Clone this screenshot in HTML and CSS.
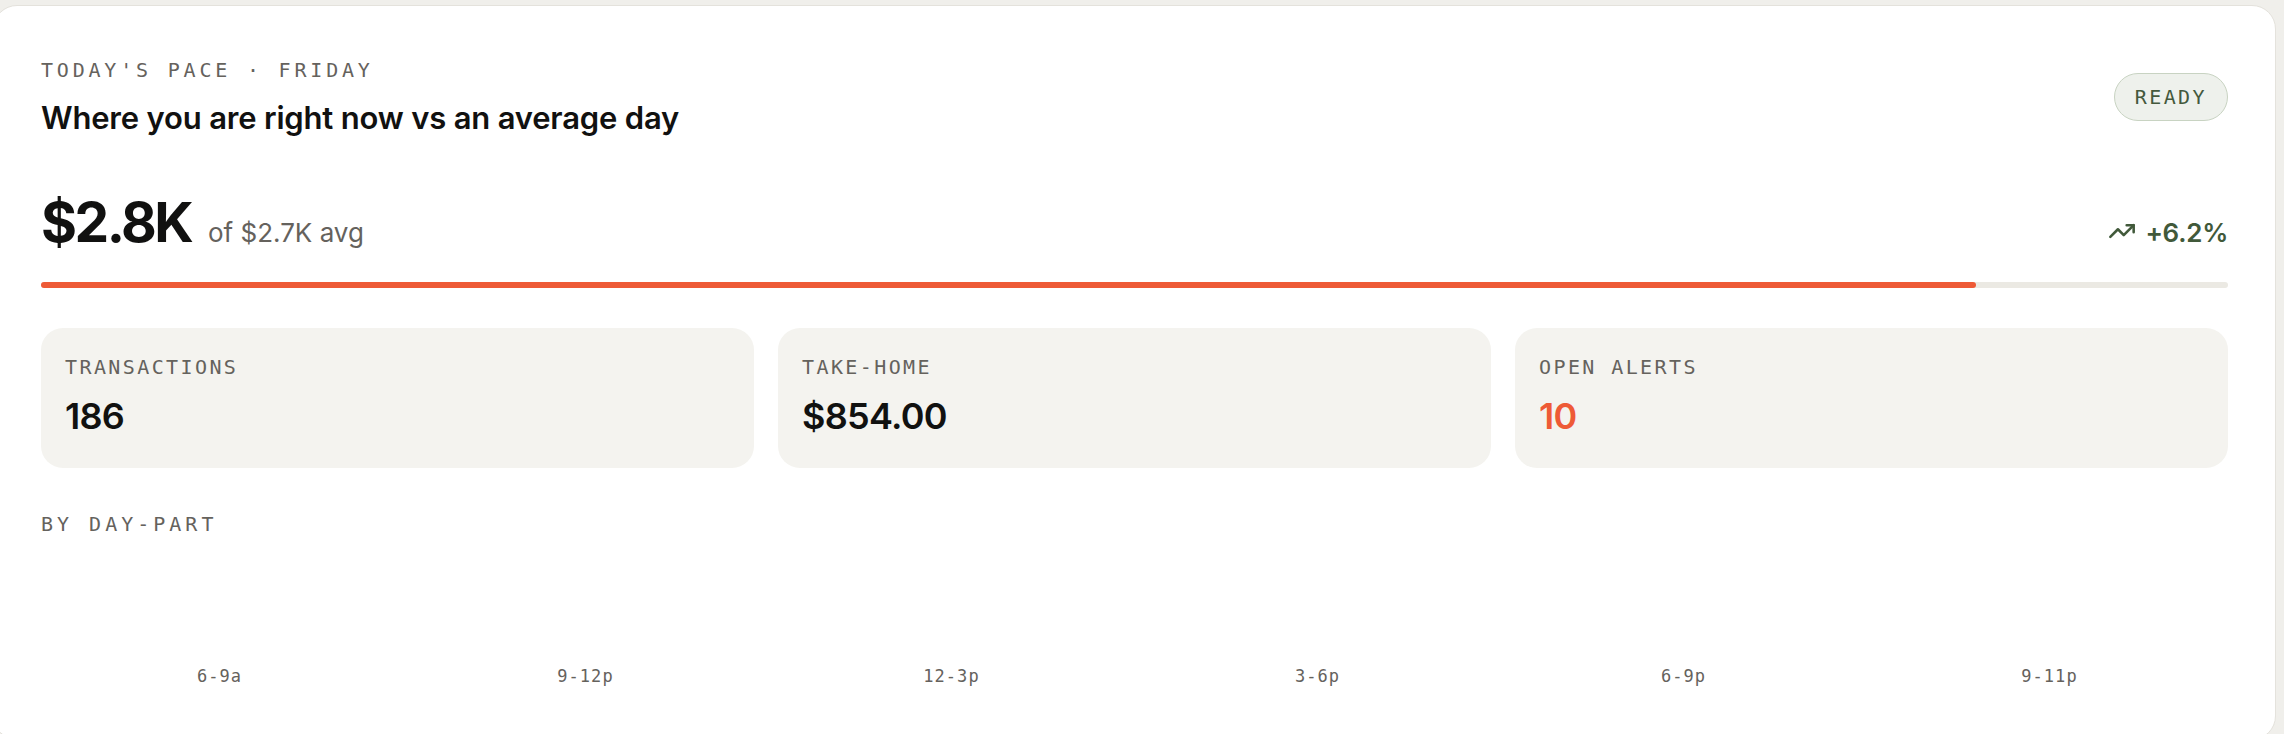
FILE: index.html
```html
<!DOCTYPE html>
<html lang="en">
<head>
    <meta charset="UTF-8">
    <meta name="viewport" content="width=device-width, initial-scale=1.0">
    <title>Today's Pace</title>
    <link rel="stylesheet" href="styles.css">
</head>
<body>
    <div class="pace-card">
        <div class="pace-header">
            <div>
                <div class="eyebrow">TODAY'S PACE · FRIDAY</div>
                <h2 class="pace-title">Where you are right now vs an average day</h2>
            </div>
            <span class="status-pill">READY</span>
        </div>

        <div class="hero-row">
            <div class="hero-amount">
                <span class="hero-value">$2.8K</span>
                <span class="hero-sub">of $2.7K avg</span>
            </div>
            <div class="hero-delta">
                <svg class="delta-icon" width="28" height="28" viewBox="0 0 24 24" fill="none" stroke="currentColor" stroke-width="2.2" stroke-linecap="round" stroke-linejoin="round">
                    <polyline points="22 7 13.5 15.5 8.5 10.5 2 17"></polyline>
                    <polyline points="16 7 22 7 22 13"></polyline>
                </svg>
                <span>+6.2%</span>
            </div>
        </div>

        <div class="progress-track">
            <div class="progress-fill" style="width: 88.5%"></div>
        </div>

        <div class="stats">
            <div class="stat">
                <div class="stat-label">TRANSACTIONS</div>
                <div class="stat-value">186</div>
            </div>
            <div class="stat">
                <div class="stat-label">TAKE-HOME</div>
                <div class="stat-value">$854.00</div>
            </div>
            <div class="stat">
                <div class="stat-label">OPEN ALERTS</div>
                <div class="stat-value alert">10</div>
            </div>
        </div>

        <div class="eyebrow section-label">BY DAY-PART</div>
        <div class="daypart-chart">
            <div class="daypart">
                <div class="bar-area"><div class="bar" style="height: 0%"></div></div>
                <div class="daypart-label">6-9a</div>
            </div>
            <div class="daypart">
                <div class="bar-area"><div class="bar" style="height: 0%"></div></div>
                <div class="daypart-label">9-12p</div>
            </div>
            <div class="daypart">
                <div class="bar-area"><div class="bar" style="height: 0%"></div></div>
                <div class="daypart-label">12-3p</div>
            </div>
            <div class="daypart">
                <div class="bar-area"><div class="bar" style="height: 0%"></div></div>
                <div class="daypart-label">3-6p</div>
            </div>
            <div class="daypart">
                <div class="bar-area"><div class="bar" style="height: 0%"></div></div>
                <div class="daypart-label">6-9p</div>
            </div>
            <div class="daypart">
                <div class="bar-area"><div class="bar" style="height: 0%"></div></div>
                <div class="daypart-label">9-11p</div>
            </div>
        </div>
    </div>
</body>
</html>
```

FILE: styles.css
```css
* {
    box-sizing: border-box;
}
body {
    margin: 0;
    padding-top: 5px;
    background-color: #f0efeb;
    font-family: Inter, "Liberation Sans", sans-serif;
    color: #111110;
    overflow: hidden;
}
.pace-card {
    width: 2283px;
    margin-left: -7px;
    padding: 52px 47px 53px;
    background: #fff;
    border: 1px solid #e4e2dc;
    border-radius: 24px;
}
.pace-header {
    display: flex;
    justify-content: space-between;
    align-items: center;
}
.eyebrow {
    font-family: "DejaVu Sans Mono", "Liberation Mono", monospace;
    font-size: 20px;
    line-height: 24px;
    letter-spacing: 0.19em;
    color: #65625d;
}
.pace-title {
    margin: 18px 0 0;
    font-size: 31px;
    line-height: 36px;
    font-weight: 600;
    letter-spacing: -0.006em;
}
.status-pill {
    padding: 11px 20px;
    border: 1.5px solid #c8d3c2;
    border-radius: 999px;
    background-color: #eef1ec;
    color: #44593d;
    font-family: "DejaVu Sans Mono", "Liberation Mono", monospace;
    font-size: 20px;
    line-height: 24px;
    letter-spacing: 0.12em;
}
.hero-row {
    display: flex;
    justify-content: space-between;
    align-items: baseline;
    margin-top: 58px;
}
.hero-value {
    font-size: 55px;
    line-height: 56px;
    font-weight: 700;
    letter-spacing: -0.045em;
}
.hero-sub {
    margin-left: 12px;
    font-size: 26px;
    color: #65625d;
}
.hero-delta {
    font-size: 26px;
    font-weight: 600;
    color: #41593a;
    letter-spacing: -0.01em;
}
.delta-icon {
    vertical-align: -3px;
    margin-right: 3px;
}
.progress-track {
    height: 6px;
    margin-top: 32px;
    border-radius: 3px;
    background-color: #ebe9e3;
}
.progress-fill {
    height: 100%;
    border-radius: 3px;
    background-color: #ee5a36;
}
.stats {
    display: grid;
    grid-template-columns: repeat(3, 1fr);
    gap: 24px;
    margin-top: 40px;
}
.stat {
    padding: 27px 24px 30px;
    border-radius: 22px;
    background-color: #f4f3ef;
}
.stat-label {
    font-family: "DejaVu Sans Mono", "Liberation Mono", monospace;
    font-size: 20px;
    line-height: 24px;
    letter-spacing: 0.12em;
    color: #65625d;
}
.stat-value {
    margin-top: 15px;
    font-size: 36px;
    line-height: 44px;
    font-weight: 600;
    letter-spacing: -0.02em;
}
.stat-value.alert {
    color: #ee5a36;
}
.section-label {
    margin-top: 44px;
    letter-spacing: 0.2em;
}
.daypart-chart {
    display: grid;
    grid-template-columns: repeat(6, 1fr);
    gap: 9px;
}
.daypart {
    display: flex;
    flex-direction: column;
    align-items: center;
}
.bar-area {
    height: 130px;
    width: 60%;
    display: flex;
    align-items: flex-end;
}
.bar {
    width: 100%;
    border-radius: 6px 6px 0 0;
    background-color: #ee5a36;
}
.daypart-label {
    font-family: "DejaVu Sans Mono", "Liberation Mono", monospace;
    font-size: 17px;
    line-height: 20px;
    letter-spacing: 0.06em;
    color: #65625d;
}
```
